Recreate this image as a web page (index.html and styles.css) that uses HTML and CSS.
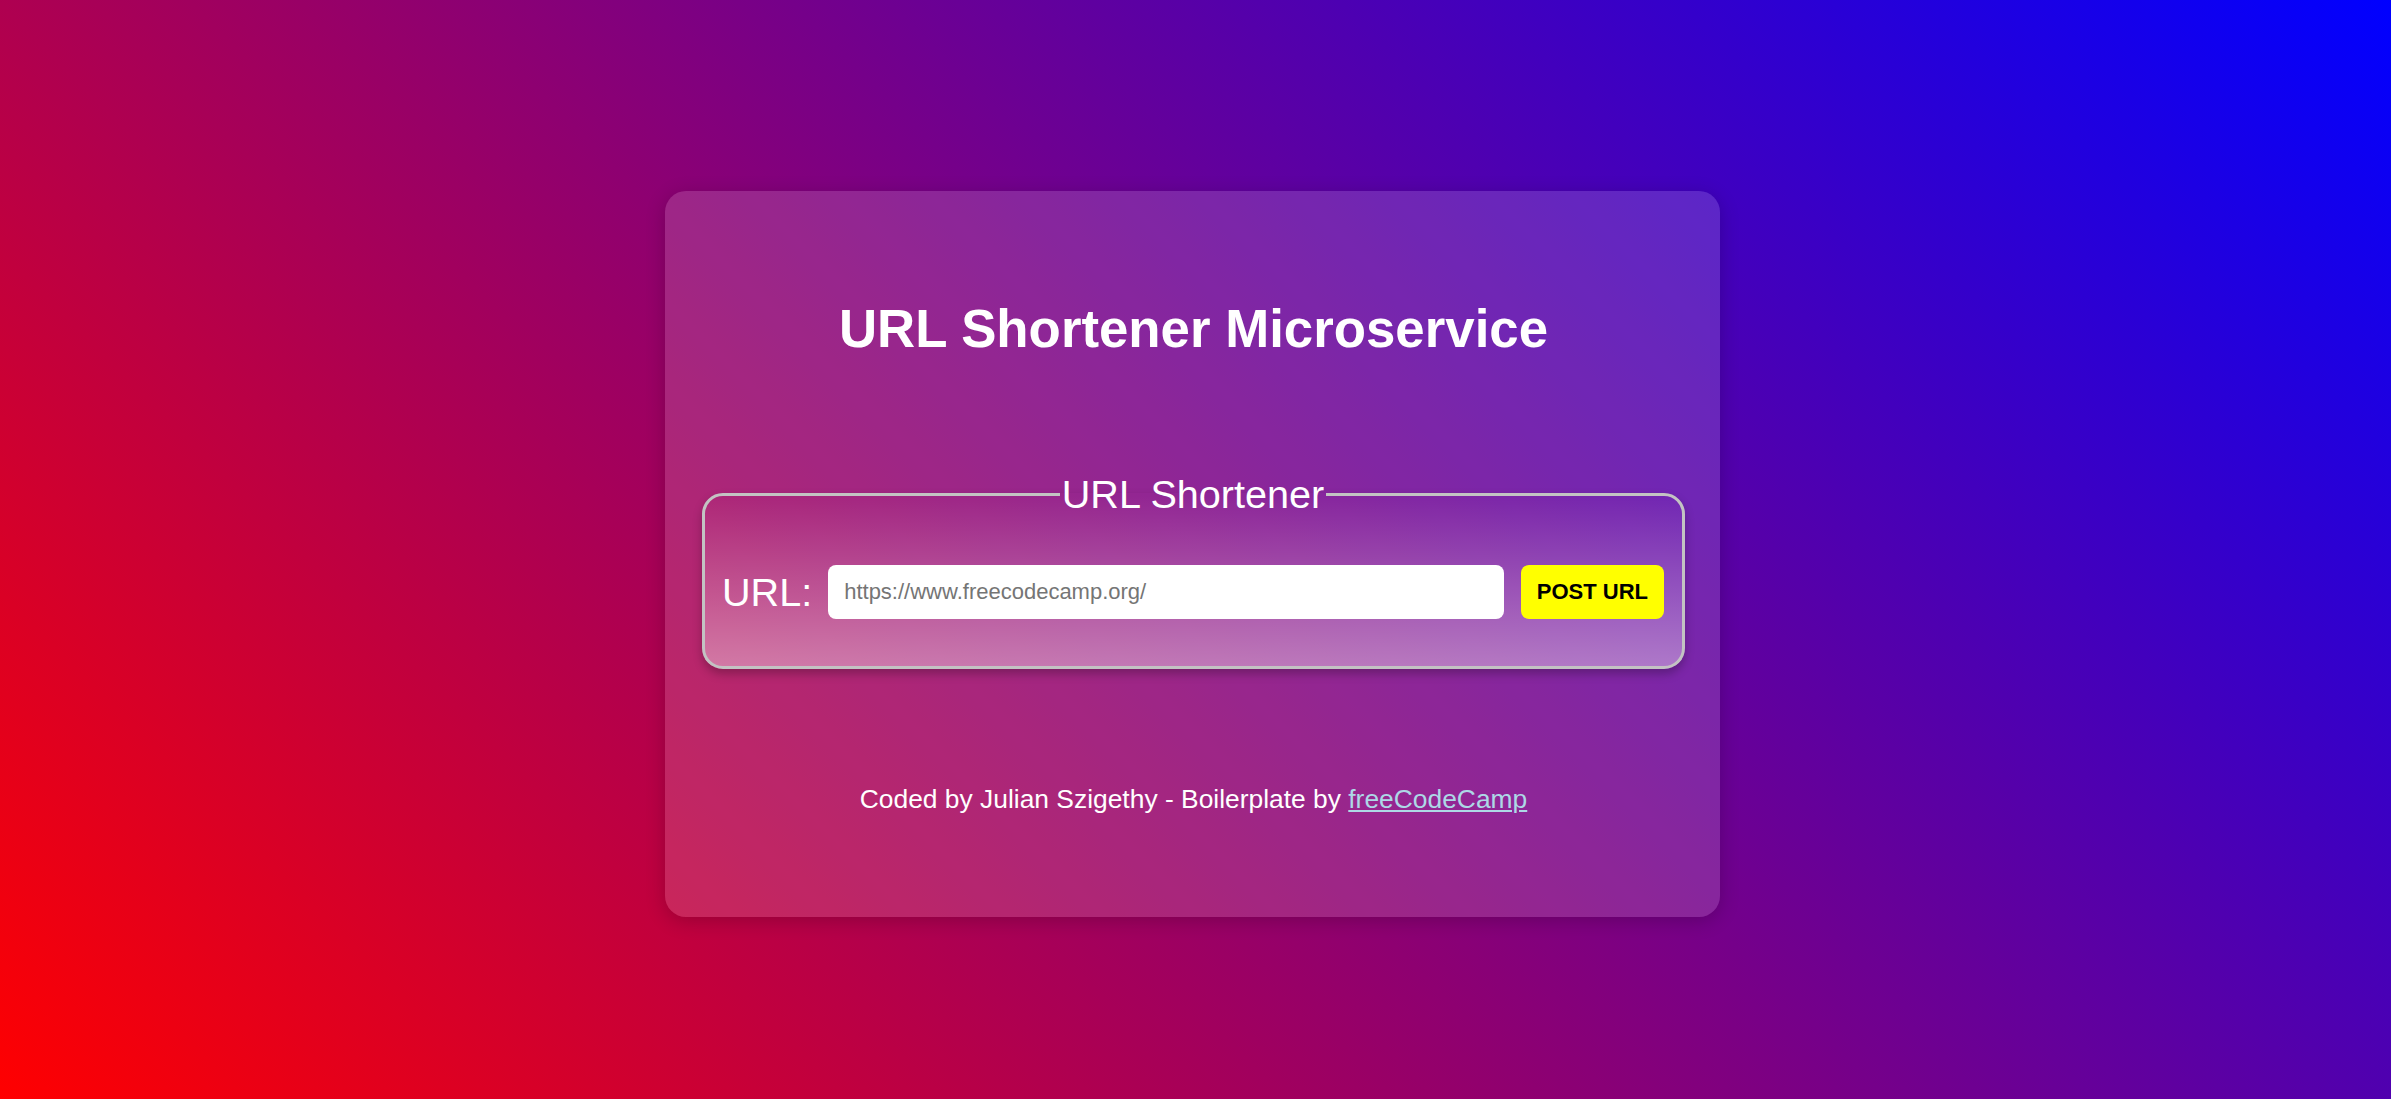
FILE: index.html
```html
<!DOCTYPE html>
<html lang="en">
<head>
<meta charset="utf-8">
<title>URL Shortener Microservice</title>
<link rel="stylesheet" href="styles.css">
</head>
<body>
<main class="card">
  <h1 class="title">URL Shortener Microservice</h1>
  <form class="form">
    <fieldset class="box">
      <legend class="legend">URL Shortener</legend>
      <div class="row">
        <label class="label" for="url_input">URL:</label>
        <input class="input" id="url_input" type="text" placeholder="https://www.freecodecamp.org/">
        <button class="btn" type="button">POST URL</button>
      </div>
    </fieldset>
  </form>
  <p class="footer">Coded by Julian Szigethy - Boilerplate by <a class="link" href="#">freeCodeCamp</a></p>
</main>
</body>
</html>
```
FILE: styles.css
```css
* { box-sizing: border-box; }
html, body { height: 100%; }
body {
  margin: 0;
  font-family: "Liberation Sans", Arial, sans-serif;
  color: #fff;
  background: linear-gradient(45deg, #ff0000, #0000ff);
  display: flex;
  align-items: center;
  justify-content: center;
}
.card {
  width: 1055px;
  height: 726px;
  margin: 9px 6px 0 0;
  padding: 107px 35px 0 37px;
  border-radius: 21px;
  background: rgba(255, 255, 255, 0.15);
  box-shadow: 0 4px 20px rgba(0, 0, 0, 0.2);
  display: flex;
  flex-direction: column;
}
.title {
  margin: 0;
  font-size: 52.8px;
  line-height: 61px;
  font-weight: bold;
  text-align: center;
}
.form { margin: 113px 0 0; }
.box {
  margin: 0;
  border: 3px solid #c3c3c3;
  border-radius: 21px;
  padding: 48px 18px 47px 17px;
  background: linear-gradient(to bottom, rgba(255, 255, 255, 0), rgba(255, 255, 255, 0.38));
  box-shadow: 0 5px 10px rgba(0, 0, 0, 0.25);
}
.legend {
  margin: 0 auto;
  padding: 0 2px;
  font-size: 39.6px;
  line-height: 45px;
}
.row {
  display: flex;
  align-items: center;
}
.label {
  font-size: 39.6px;
  margin-right: 16px;
}
.input {
  flex: 1;
  height: 54px;
  border: none;
  border-radius: 8px;
  padding: 0 16px;
  font-family: "Liberation Sans", Arial, sans-serif;
  font-size: 22px;
  color: #333;
  background: #fff;
  outline: none;
}
.input::placeholder { color: #757575; }
.btn {
  margin-left: 17px;
  height: 54px;
  padding: 0 16px;
  border: none;
  border-radius: 8px;
  background: #ffff00;
  color: #000;
  font-family: "Liberation Sans", Arial, sans-serif;
  font-size: 22px;
  font-weight: bold;
}
.footer {
  margin: 115px 0 0;
  font-size: 26.4px;
  line-height: 30px;
  text-align: center;
}
.link { color: #add8e6; }
```
